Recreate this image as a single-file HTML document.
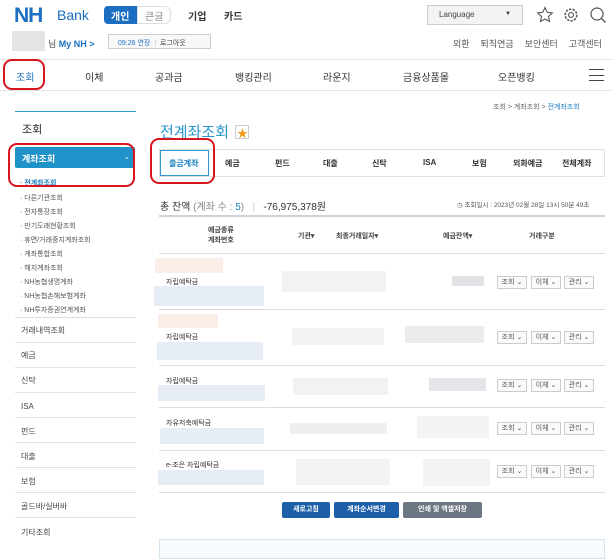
<!DOCTYPE html>
<html><head><meta charset="utf-8"><style>
*{margin:0;padding:0;box-sizing:border-box}
body{width:612px;height:547px;overflow:hidden;background:#fff;position:relative;font-family:"Liberation Sans","Noto Sans CJK KR",sans-serif;color:#333}
.a{position:absolute;white-space:nowrap}
.f10{font-size:10px}.f9{font-size:9px}.f8{font-size:8px}.f7{font-size:7px}
.blk{position:absolute}
.rb{position:absolute;border:2px solid #d9161f;border-radius:9px}
.sb{position:absolute;font-size:7px;color:#555;background:#fafafa;border:1px solid #ccc;height:13px;line-height:11px;text-align:center;width:30px}
</style></head><body>
<!-- header -->
<div class="a" style="left:14px;top:4px;font-size:21px;font-weight:bold;color:#1b6fc0;letter-spacing:-1px;font-family:'Liberation Sans',sans-serif">NH</div>
<div class="a" style="left:57px;top:7px;font-size:14px;color:#1b6fc0">Bank</div>
<div class="blk" style="left:104px;top:6px;width:34px;height:18px;background:#1b6fc0;border-radius:4px 0 0 4px"></div>
<div class="a f10" style="left:111px;top:8px;color:#fff;font-weight:bold">개인</div>
<div class="blk" style="left:137px;top:6px;width:34px;height:18px;border:1px solid #ddd;border-radius:0 6px 6px 0"></div>
<div class="a f10" style="left:145px;top:8px;color:#888">큰글</div>
<div class="a f10" style="left:188px;top:8px;font-weight:bold">기업</div>
<div class="a f10" style="left:224px;top:8px;font-weight:bold">카드</div>
<div class="blk" style="left:427px;top:5px;width:96px;height:20px;border:1px solid #ccc;background:#f3f3f3"></div>
<div class="a f8" style="left:439px;top:10px;color:#444">Language</div>
<div class="a" style="left:505px;top:11px;font-size:6px">▼</div>
<svg class="a" style="left:536px;top:6px" width="18" height="18" viewBox="0 0 18 18"><path d="M9 1.5l2.2 4.8 5.1.6-3.8 3.5 1 5.1L9 13l-4.5 2.5 1-5.1L1.7 6.9l5.1-.6z" fill="none" stroke="#555" stroke-width="1.1"/></svg>
<svg class="a" style="left:562px;top:6px" width="18" height="18" viewBox="0 0 18 18"><circle cx="9" cy="9" r="5.8" fill="none" stroke="#555" stroke-width="1.6" stroke-dasharray="2.3 1.3"/><circle cx="9" cy="9" r="2.4" fill="none" stroke="#555" stroke-width="1.1"/></svg>
<svg class="a" style="left:589px;top:6px" width="18" height="18" viewBox="0 0 18 18"><circle cx="8" cy="8" r="6" fill="none" stroke="#555" stroke-width="1.2"/><path d="M12.5 12.5l4 4" stroke="#555" stroke-width="1.3"/></svg>
<div class="blk" style="left:12px;top:31px;width:33px;height:20px;background:#e4e4e4"></div>
<div class="a f9" style="left:48px;top:37px;color:#444">님 <b style="color:#1b6fc0">My NH &gt;</b></div>
<div class="blk" style="left:108px;top:34px;width:103px;height:15px;border:1px solid #ccc;background:#f8f8f8"></div>
<div class="a f7" style="left:118px;top:38px;color:#1b6fc0">09:26 연장 <span style="color:#bbb">&nbsp;|&nbsp;</span> <span style="color:#444">로그아웃</span></div>
<div class="a f9" style="left:453px;top:37px;color:#555;word-spacing:3px">외환 &nbsp;퇴직연금 &nbsp;보안센터 &nbsp;고객센터</div>
<div class="blk" style="left:0;top:59px;width:612px;height:1px;background:#e6e6e6"></div>
<div class="a f10" style="left:16px;top:69px;color:#1b6fc0">조회</div>
<div class="a f10" style="left:85px;top:69px">이체</div>
<div class="a f10" style="left:155px;top:69px">공과금</div>
<div class="a f10" style="left:235px;top:69px">뱅킹관리</div>
<div class="a f10" style="left:323px;top:69px">라운지</div>
<div class="a f10" style="left:403px;top:69px">금융상품몰</div>
<div class="a f10" style="left:498px;top:69px">오픈뱅킹</div>
<div class="blk" style="left:589px;top:69px;width:15px;height:12px;border-top:1.5px solid #444;border-bottom:1.5px solid #444"></div>
<div class="blk" style="left:589px;top:74.5px;width:15px;height:1.5px;background:#444"></div>
<div class="blk" style="left:0;top:90px;width:612px;height:1px;background:#e6e6e6"></div>
<div class="rb" style="left:3px;top:59px;width:42px;height:31px"></div>
<!-- sidebar -->
<div class="blk" style="left:15px;top:111px;width:121px;height:1px;background:#2f98d0"></div>
<div class="a" style="left:22px;top:121px;font-size:11px;color:#222">조회</div>
<div class="blk" style="left:15px;top:147px;width:120px;height:21px;background:#1e92c9;border-radius:2px"></div>
<div class="a f9" style="left:22px;top:152px;color:#fff;font-weight:bold">계좌조회</div>
<div class="a" style="left:124px;top:153px;color:#fff;font-size:7px">⌄</div>
<div class="a f7" style="left:20px;top:178px;color:#1e82c0;font-weight:bold">· 전계좌조회</div>
<div class="a f7" style="left:20px;top:192px;color:#555;line-height:14px">· 다른기관조회<br>· 전자통장조회<br>· 만기도래현황조회<br>· 휴면/거래중지계좌조회<br>· 계좌통합조회<br>· 해지계좌조회<br>· NH농협생명계좌<br>· NH농협손해보험계좌<br>· NH투자증권연계계좌</div>
<div class="rb" style="left:8px;top:143px;width:127px;height:44px"></div>
<div class="blk" style="left:15px;top:317px;width:121px;height:225px;border-top:1px solid #ddd;background:repeating-linear-gradient(to bottom,transparent 0,transparent 24px,#e2e2e2 24px,#e2e2e2 25px)"></div>
<div class="a f8" style="left:21px;top:318px;color:#444;line-height:25.2px">거래내역조회<br>예금<br>신탁<br>ISA<br>펀드<br>대출<br>보험<br>골드바/실버바<br>기타조회</div>
<!-- main -->
<div class="a f7" style="left:493px;top:102px;color:#666">조회 &gt; 계좌조회 &gt; <span style="color:#1e82c0">전계좌조회</span></div>
<div class="a" style="left:160px;top:121px;font-size:15px;color:#2a95cc">전계좌조회</div>
<div class="blk" style="left:235px;top:125px;width:14px;height:14px;border:1px solid #ccc;background:#fff"></div>
<div class="a" style="left:237px;top:125px;font-size:11px;color:#f39a1a">★</div>
<div class="blk" style="left:159px;top:149px;width:446px;height:28px;border:1px solid #e0e0e0"></div>
<div class="blk" style="left:160px;top:150px;width:49px;height:26px;border:1px solid #2f98d0"></div>
<div class="a f8" style="left:169px;top:158px;color:#1e82c0;font-weight:bold">출금계좌</div>
<div class="a f8" style="left:225px;top:158px;font-weight:bold;color:#333">예금</div>
<div class="a f8" style="left:275px;top:158px;font-weight:bold;color:#333">펀드</div>
<div class="a f8" style="left:323px;top:158px;font-weight:bold;color:#333">대출</div>
<div class="a f8" style="left:372px;top:158px;font-weight:bold;color:#333">신탁</div>
<div class="a f8" style="left:423px;top:158px;font-weight:bold;color:#333">ISA</div>
<div class="a f8" style="left:472px;top:158px;font-weight:bold;color:#333">보험</div>
<div class="a f8" style="left:513px;top:158px;font-weight:bold;color:#333">외화예금</div>
<div class="a f8" style="left:562px;top:158px;font-weight:bold;color:#333">전체계좌</div>
<div class="rb" style="left:150px;top:138px;width:65px;height:46px"></div>
<div class="a" style="left:160px;top:198px;font-size:10px;color:#333">총 잔액 <span style="color:#888">(계좌 수 : <span style="color:#1e82c0">5</span>)</span> <span style="color:#ccc">&nbsp;&nbsp;|&nbsp;&nbsp;</span> -76,975,378원</div>
<div class="a" style="left:457px;top:199px;font-size:6.5px;color:#555">◷ 조회일시 : 2023년 02월 28일 13시 50분 49초</div>
<div class="blk" style="left:159px;top:215px;width:446px;height:2px;background:#cfd3d8"></div>
<div class="a f7" style="left:208px;top:226px;font-weight:bold;color:#444;text-align:center;line-height:10px">예금종류<br>계좌번호</div>
<div class="a f7" style="left:298px;top:231px;font-weight:bold;color:#444">기관▾</div>
<div class="a f7" style="left:336px;top:231px;font-weight:bold;color:#444">최종거래일자▾</div>
<div class="a f7" style="left:443px;top:231px;font-weight:bold;color:#444">예금잔액▾</div>
<div class="a f7" style="left:529px;top:231px;font-weight:bold;color:#444">거래구분</div>
<div class="blk" style="left:159px;top:253px;width:446px;height:1px;background:#ddd"></div>
<!-- rows -->
<div class="blk" style="left:155px;top:258px;width:68px;height:15px;background:#fbeee8"></div>
<div class="a f7" style="left:166px;top:277px">자립예탁금</div>
<div class="blk" style="left:154px;top:286px;width:110px;height:20px;background:#e6edf5"></div>
<div class="blk" style="left:282px;top:271px;width:104px;height:21px;background:#f1f2f4"></div>
<div class="blk" style="left:452px;top:276px;width:32px;height:10px;background:#e2e3e6"></div>
<div class="blk" style="left:159px;top:309px;width:446px;height:1px;background:#ddd"></div>
<div class="blk" style="left:158px;top:314px;width:60px;height:14px;background:#fbeee8"></div>
<div class="a f7" style="left:166px;top:332px">자립예탁금</div>
<div class="blk" style="left:157px;top:342px;width:106px;height:18px;background:#e6edf5"></div>
<div class="blk" style="left:292px;top:328px;width:92px;height:17px;background:#f1f2f4"></div>
<div class="blk" style="left:405px;top:326px;width:79px;height:17px;background:#ebecee"></div>
<div class="blk" style="left:159px;top:365px;width:446px;height:1px;background:#ddd"></div>
<div class="a f7" style="left:166px;top:376px">자립예탁금</div>
<div class="blk" style="left:158px;top:385px;width:107px;height:16px;background:#e6edf5"></div>
<div class="blk" style="left:293px;top:378px;width:95px;height:17px;background:#f1f2f4"></div>
<div class="blk" style="left:429px;top:378px;width:57px;height:13px;background:#e5e6e9"></div>
<div class="blk" style="left:159px;top:407px;width:446px;height:1px;background:#ddd"></div>
<div class="a f7" style="left:166px;top:418px">자유저축예탁금</div>
<div class="blk" style="left:160px;top:428px;width:104px;height:16px;background:#e6edf5"></div>
<div class="blk" style="left:290px;top:423px;width:97px;height:11px;background:#eeeff1"></div>
<div class="blk" style="left:417px;top:416px;width:72px;height:22px;background:#f2f3f4"></div>
<div class="blk" style="left:159px;top:450px;width:446px;height:1px;background:#ddd"></div>
<div class="a f7" style="left:166px;top:460px">e-조은 자립예탁금</div>
<div class="blk" style="left:158px;top:470px;width:106px;height:15px;background:#e6edf5"></div>
<div class="blk" style="left:296px;top:459px;width:94px;height:26px;background:#f2f3f4"></div>
<div class="blk" style="left:423px;top:459px;width:67px;height:27px;background:#f2f3f4"></div>
<div class="blk" style="left:159px;top:492px;width:446px;height:1px;background:#ddd"></div>
<!-- row buttons -->
<div class="sb" style="left:497px;top:276px">조회 ⌄</div><div class="sb" style="left:531px;top:276px">이체 ⌄</div><div class="sb" style="left:564px;top:276px">관리 ⌄</div>
<div class="sb" style="left:497px;top:331px">조회 ⌄</div><div class="sb" style="left:531px;top:331px">이체 ⌄</div><div class="sb" style="left:564px;top:331px">관리 ⌄</div>
<div class="sb" style="left:497px;top:379px">조회 ⌄</div><div class="sb" style="left:531px;top:379px">이체 ⌄</div><div class="sb" style="left:564px;top:379px">관리 ⌄</div>
<div class="sb" style="left:497px;top:422px">조회 ⌄</div><div class="sb" style="left:531px;top:422px">이체 ⌄</div><div class="sb" style="left:564px;top:422px">관리 ⌄</div>
<div class="sb" style="left:497px;top:465px">조회 ⌄</div><div class="sb" style="left:531px;top:465px">이체 ⌄</div><div class="sb" style="left:564px;top:465px">관리 ⌄</div>
<!-- bottom buttons -->
<div class="a f7" style="left:282px;top:502px;width:48px;height:16px;line-height:16px;text-align:center;background:#1d5fa8;color:#fff;font-weight:bold;border-radius:2px">새로고침</div>
<div class="a f7" style="left:334px;top:502px;width:65px;height:16px;line-height:16px;text-align:center;background:#1d5fa8;color:#fff;font-weight:bold;border-radius:2px">계좌순서변경</div>
<div class="a f7" style="left:403px;top:502px;width:79px;height:16px;line-height:16px;text-align:center;background:#6d7683;color:#fff;font-weight:bold;border-radius:2px">인쇄 및 엑셀저장</div>
<div class="blk" style="left:159px;top:539px;width:446px;height:20px;border:1px solid #d3e4ee;background:#f7fbfd"></div>
</body></html>
